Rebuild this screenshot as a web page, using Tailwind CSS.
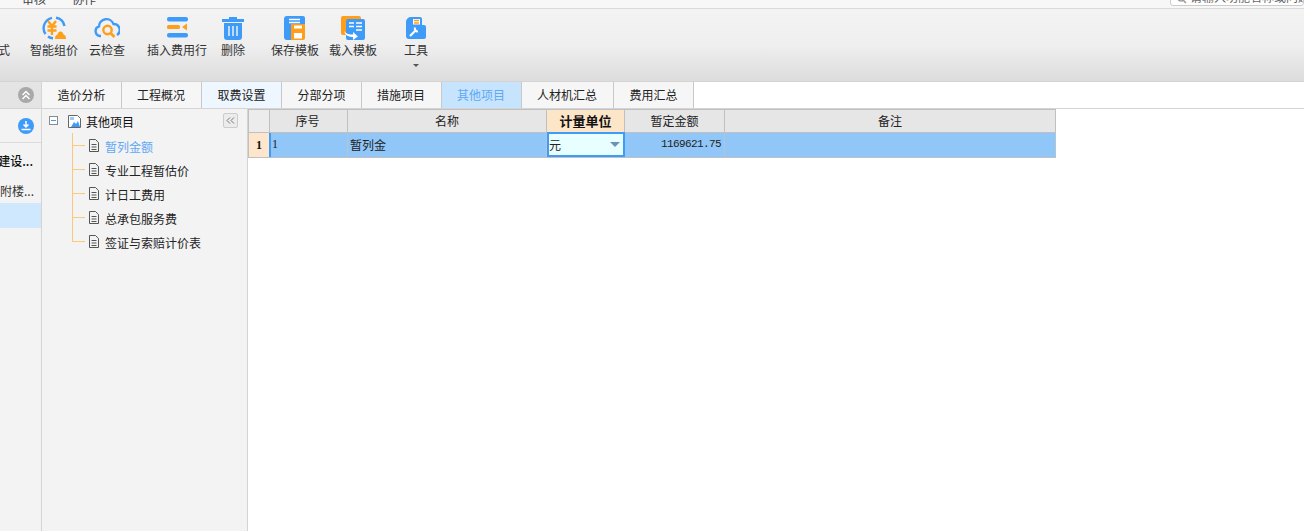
<!doctype html>
<html>
<head>
  <meta charset="UTF-8">
  <meta name="viewport" content="width=device-width, initial-scale=1.0">
  <script src="https://cdn.jsdelivr.net/npm/@tailwindcss/browser@4"></script>
</head>
<body class="bg-white h-screen overflow-hidden flex flex-col text-[12px] text-[#222] font-['Noto_Sans_CJK_SC','Liberation_Sans',sans-serif]">

<!-- top menu, cut off by the window -->
<div class="h-[9px] shrink-0 bg-[#f7f7f7] border-b border-[#d9d9d9] flex items-end overflow-hidden relative">
  <span class="ml-[22px] mb-[1px] text-[#444] leading-[16px]">审核</span>
  <span class="ml-[26px] mb-[1px] text-[#444] leading-[16px]">协作</span>
  <div class="ml-auto w-[134px] h-[16px] mb-[2px] self-end bg-white border border-[#ccc] rounded-[3px] flex items-end pl-[6px] text-[#666] leading-[16px] whitespace-nowrap overflow-hidden">
    <svg class="w-[10px] h-[10px] mr-[3px] mb-px shrink-0" viewBox="0 0 10 10" fill="none" stroke="#999" stroke-width="1.500"><circle cx="4" cy="4" r="3"/><path d="M6 6l3 3"/></svg>
    <span>请输入功能名称或问题</span>
  </div>
</div>

<!-- ribbon -->
<div class="h-[72px] shrink-0 bg-gradient-to-b from-[#f3f3f3] via-[#efefef] to-[#dcdcdc] flex leading-[16px] text-[#333]">
  <div class="w-[10px] flex justify-end pt-[33px]"><span class="whitespace-nowrap">式</span></div>

  <div class="w-[48px] ml-[20px] flex flex-col items-center">
    <svg class="mt-[7px] h-[24px] w-[26px]" viewBox="0 0 26 24" fill="none">
      <path d="M4.500 18A10.500 10.500 0 0 1 11 1.800" stroke="#3f9bf8" stroke-width="2.400"/>
      <path d="M15 1.800A10.500 10.500 0 0 1 23.500 10" stroke="#3f9bf8" stroke-width="2.400"/>
      <path d="M7 20.500a10 10 0 0 0 5 1.800" stroke="#3f9bf8" stroke-width="2.400"/>
      <path d="M7 5l4 5 4-5M6.500 10.500h9M6.500 14.500h9M11 10v9" stroke="#ff9e1b" stroke-width="2.400"/>
      <path d="M14 23c0-3 1-4 2.500-4.500 .5-2 1.500-3 3-3s2.500 1 3 3C24 19 25 20 25 23z" fill="#ff9e1b"/>
    </svg>
    <span class="mt-[2px] whitespace-nowrap">智能组价</span>
  </div>

  <div class="w-[36px] ml-[11px] flex flex-col items-center">
    <svg class="mt-[7px] h-[24px] w-[26px]" viewBox="0 0 26 24" fill="none">
      <path d="M7 20H6a5 5 0 0 1-1-9.700A7.500 7.500 0 0 1 19.500 8 6 6 0 0 1 23 19" stroke="#3f9bf8" stroke-width="2.400"/>
      <circle cx="13.500" cy="14" r="4.200" stroke="#ff9e1b" stroke-width="2.400"/>
      <path d="M17 17.500l3.500 3.500" stroke="#ff9e1b" stroke-width="2.600"/>
    </svg>
    <span class="mt-[2px] whitespace-nowrap">云检查</span>
  </div>

  <div class="w-[60px] ml-[22px] flex flex-col items-center">
    <svg class="mt-[7px] h-[24px] w-[24px]" viewBox="0 0 24 24">
      <rect x="2" y="1" width="21" height="4.500" rx="2" fill="#3f9bf8"/>
      <rect x="2" y="9" width="13" height="4" rx="1.500" fill="#ff9e1b"/>
      <path d="M22 7.500v7l-5-3.500z" fill="#ff9e1b"/>
      <rect x="2" y="17" width="21" height="4.500" rx="2" fill="#3f9bf8"/>
    </svg>
    <span class="mt-[2px] whitespace-nowrap">插入费用行</span>
  </div>

  <div class="w-[24px] ml-[14px] flex flex-col items-center">
    <svg class="mt-[7px] h-[24px] w-[24px]" viewBox="0 0 24 24">
      <path d="M8 1h8v2h7v3H1V3h7z" fill="#3f9bf8"/>
      <path d="M3 7h18v14a3 3 0 0 1-3 3H6a3 3 0 0 1-3-3z" fill="#3f9bf8"/>
      <path d="M8 10v10M12 10v10M16 10v10" stroke="#fff" stroke-width="1.300"/>
    </svg>
    <span class="mt-[2px] whitespace-nowrap">删除</span>
  </div>

  <div class="w-[48px] ml-[26px] flex flex-col items-center">
    <svg class="mt-[7px] h-[24px] w-[24px]" viewBox="0 0 24 24">
      <path d="M4 0h16a2 2 0 0 1 2 2v6H8v16H4a3 3 0 0 1-3-3V3a3 3 0 0 1 3-3z" fill="#3f9bf8"/>
      <path d="M6 3.500h11M6 6.500h11" stroke="#fff" stroke-width="1.500"/>
      <path d="M8 8h14v14a2 2 0 0 1-2 2H8z" fill="#ff9e1b"/>
      <rect x="11" y="9.500" width="8" height="3" fill="#fff"/>
      <rect x="11" y="17" width="8" height="5.500" fill="#fff"/>
    </svg>
    <span class="mt-[2px] whitespace-nowrap">保存模板</span>
  </div>

  <div class="w-[48px] ml-[10px] flex flex-col items-center">
    <svg class="mt-[7px] h-[24px] w-[24px]" viewBox="0 0 24 24">
      <rect x="0" y="0" width="20" height="19" rx="2" fill="#ff9e1b"/>
      <rect x="5" y="3" width="19" height="21" rx="2" fill="#3f9bf8"/>
      <path d="M8 7h5M15 7h6M8 10.500h5M15 10.500h6M15 14h6" stroke="#fff" stroke-width="1.500"/>
      <path d="M3 15c2 3 6 3.500 9 3.500V16l5 4.500-5 3.500v-3c-4 0-8-1.500-9-6z" fill="#fff"/>
    </svg>
    <span class="mt-[2px] whitespace-nowrap">载入模板</span>
  </div>

  <div class="w-[24px] ml-[27px] flex flex-col items-center">
    <svg class="mt-[7px] h-[24px] w-[20px]" viewBox="0 0 20 24">
      <path d="M5 1h9a2 2 0 0 1 2 2v6h2a2 2 0 0 1 2 2v10a2 2 0 0 1-2 2H3a3 3 0 0 1-3-3V6a5 5 0 0 1 5-5z" fill="#3f9bf8"/>
      <rect x="7" y="3" width="7" height="5.500" fill="#fff"/>
      <path d="M8 4.500h5M8 7h5" stroke="#ff9e1b" stroke-width="1.500"/>
      <path d="M4 20l6-6M9 11.500a3 3 0 0 0 3 4" stroke="#fff" stroke-width="2.200" fill="none"/>
    </svg>
    <span class="mt-[2px] whitespace-nowrap">工具</span>
    <span class="mt-[6px] w-0 h-0 border-x-[3px] border-x-transparent border-t-[3px] border-t-[#555]"></span>
  </div>
</div>

<!-- tabs -->
<div class="h-[28px] shrink-0 flex border-y border-[#d4d4d4] bg-white leading-[26px] text-center text-[#222]">
  <div class="w-[42px] bg-[#e4e4e4] border-r border-[#d4d4d4] flex items-center justify-end pr-[7px]">
    <span class="w-[16px] h-[16px] rounded-full bg-[#a9a9a9] flex items-center justify-center">
      <svg class="w-[10px] h-[10px]" viewBox="0 0 10 10" fill="none" stroke="#fff" stroke-width="1.500"><path d="M1.500 5L5 1.500 8.500 5M1.500 9L5 5.500 8.500 9"/></svg>
    </span>
  </div>
  <div class="w-[80px] bg-[#f6f6f6] border-r border-[#c8c8c8]">造价分析</div>
  <div class="w-[80px] bg-[#f6f6f6] border-r border-[#c8c8c8] pr-[1px]">工程概况</div>
  <div class="w-[80px] bg-[#eef6ff] border-r border-[#c8c8c8]">取费设置</div>
  <div class="w-[80px] bg-[#f6f6f6] border-r border-[#c8c8c8]">分部分项</div>
  <div class="w-[80px] bg-[#f6f6f6] border-r border-[#c8c8c8] pr-[1px]">措施项目</div>
  <div class="w-[80px] bg-[#c6e4fd] border-r border-[#c8c8c8] text-[#5fa8f5] pr-[1px]">其他项目</div>
  <div class="w-[92px] bg-[#f6f6f6] border-r border-[#c8c8c8] pr-[1px]">人材机汇总</div>
  <div class="w-[80px] bg-[#f6f6f6] border-r border-[#c8c8c8]">费用汇总</div>
</div>

<!-- main -->
<div class="flex-1 flex min-h-0">
  <!-- project tree, its left part is scrolled away -->
  <div class="w-[42px] shrink-0 bg-[#f3f3f3] border-r border-[#d4d4d4] overflow-hidden">
    <div class="h-[34px] border-b border-[#dcdcdc] flex items-center justify-end pr-[7px]">
      <span class="w-[16px] h-[16px] rounded-full bg-[#3f9bf8] flex items-center justify-center">
        <svg class="w-[10px] h-[10px]" viewBox="0 0 10 10" fill="none" stroke="#fff" stroke-width="1.500"><path d="M5 0v5.500M2.500 3.500L5 6l2.500-2.500M0.500 8.500h9"/></svg>
      </span>
    </div>
    <div class="h-[36px] flex items-center justify-end pr-[8px] whitespace-nowrap font-medium text-[#111]">建设...</div>
    <div class="h-[24px] flex items-center justify-end pr-[7px] whitespace-nowrap text-[#333]">附楼...</div>
    <div class="h-[25px] bg-[#cfe8fd]"></div>
  </div>

  <!-- other items tree -->
  <div class="w-[206px] shrink-0 bg-[#f3f3f3] border-r border-[#d4d4d4] leading-[24px] text-[#222]">
    <div class="h-[26px] flex items-center pl-[7px] pr-[9px]">
      <span class="w-[9px] h-[9px] border border-[#8a8a8a] flex items-center justify-center bg-white -mt-[3px]">
        <span class="w-[5px] h-px bg-[#3f9bf8]"></span>
      </span>
      <svg class="ml-[10px] w-[13px] h-[13px] -mt-[2px]" viewBox="0 0 13 13" fill="none">
        <path d="M.5.500h9l3 3v9H.5z" stroke="#666" fill="#fff"/>
        <rect x="2" y="2" width="4" height="3" fill="#9ccbf8"/>
        <path d="M3 12l3-5 2 2 2-3 2 6z" fill="#3f9bf8"/>
      </svg>
      <span class="ml-[5px] text-[#111]">其他项目</span>
      <span class="ml-auto w-[15px] h-[15px] border border-[#ccc] rounded-[2px] bg-[#ececec] flex items-center justify-center -mt-[3px]">
        <svg class="w-[9px] h-[7px]" viewBox="0 0 9 7" fill="none" stroke="#777"><path d="M4 .500L1 3.500l3 3M8 .500L5 3.500l3 3"/></svg>
      </span>
    </div>
    <ul class="relative">
      <li class="h-[24px] flex items-center pl-[30px]">
        <span class="w-[13px] h-px bg-[#fcc97a] -mt-[4px]"></span>
        <svg class="ml-[4px] w-[10px] h-[13px] -mt-[4px]" viewBox="0 0 10 13" fill="none" stroke="#555"><path d="M.5.500h6l3 3v9H.5zM2.500 5.500h5M2.500 8h5M2.500 10.500h5" /></svg>
        <span class="ml-[6px] text-[#5fa8f5]">暂列金额</span>
      </li>
      <li class="h-[24px] flex items-center pl-[30px]">
        <span class="w-[13px] h-px bg-[#fcc97a] -mt-[4px]"></span>
        <svg class="ml-[4px] w-[10px] h-[13px] -mt-[4px]" viewBox="0 0 10 13" fill="none" stroke="#555"><path d="M.5.500h6l3 3v9H.5zM2.500 5.500h5M2.500 8h5M2.500 10.500h5" /></svg>
        <span class="ml-[6px]">专业工程暂估价</span>
      </li>
      <li class="h-[24px] flex items-center pl-[30px]">
        <span class="w-[13px] h-px bg-[#fcc97a] -mt-[4px]"></span>
        <svg class="ml-[4px] w-[10px] h-[13px] -mt-[4px]" viewBox="0 0 10 13" fill="none" stroke="#555"><path d="M.5.500h6l3 3v9H.5zM2.500 5.500h5M2.500 8h5M2.500 10.500h5" /></svg>
        <span class="ml-[6px]">计日工费用</span>
      </li>
      <li class="h-[24px] flex items-center pl-[30px]">
        <span class="w-[13px] h-px bg-[#fcc97a] -mt-[4px]"></span>
        <svg class="ml-[4px] w-[10px] h-[13px] -mt-[4px]" viewBox="0 0 10 13" fill="none" stroke="#555"><path d="M.5.500h6l3 3v9H.5zM2.500 5.500h5M2.500 8h5M2.500 10.500h5" /></svg>
        <span class="ml-[6px]">总承包服务费</span>
      </li>
      <li class="h-[24px] flex items-center pl-[30px]">
        <span class="w-[13px] h-px bg-[#fcc97a] -mt-[4px]"></span>
        <svg class="ml-[4px] w-[10px] h-[13px] -mt-[4px]" viewBox="0 0 10 13" fill="none" stroke="#555"><path d="M.5.500h6l3 3v9H.5zM2.500 5.500h5M2.500 8h5M2.500 10.500h5" /></svg>
        <span class="ml-[6px]">签证与索赔计价表</span>
      </li>
      <span class="absolute left-[30px] -top-[2px] w-px h-[108px] bg-[#fcc97a]"></span>
    </ul>
  </div>

  <!-- grid -->
  <div class="flex-1 min-w-0">
    <div class="w-[808px] grid grid-cols-[21px_78px_199px_78px_100px_331px] grid-rows-[24px_24px] border-l border-b border-[#c0c0c0] text-[#222] leading-[22px]">
      <div class="bg-[#ececec] border-y border-r border-[#c0c0c0]"></div>
      <div class="bg-[#e6e6e6] border-y border-r border-[#c0c0c0] text-center pr-[2px]">序号</div>
      <div class="bg-[#e6e6e6] border-y border-r border-[#c0c0c0] text-center">名称</div>
      <div class="bg-[#fde6c8] border-y border-r border-[#c0c0c0] text-center font-bold text-[13px] text-[#111]">计量单位</div>
      <div class="bg-[#e6e6e6] border-y border-r border-[#c0c0c0] text-center">暂定金额</div>
      <div class="bg-[#e6e6e6] border-y border-r border-[#c0c0c0] text-center">备注</div>

      <div class="bg-[#fde6cb] border-r border-[#c0c0c0] text-center font-bold font-['Liberation_Serif',serif] text-[#111] leading-[24px]">1</div>
      <div class="bg-[#90c7f8] -ml-px border-l-2 border-l-[#3f9bf8] border-r border-r-[#b4c4d2] pl-px font-['Liberation_Serif',serif] leading-[23px]">1</div>
      <div class="bg-[#90c7f8] border-r border-[#b4c4d2] pl-[2px] leading-[23px]">暂列金</div>
      <div class="bg-[#e8ffff] border-2 border-[#3f9bf8] flex items-center pr-[3px] -mt-px">
        <span>元</span>
        <span class="ml-auto w-0 h-0 border-x-[5px] border-x-transparent border-t-[5px] border-t-[#6b93b8]"></span>
      </div>
      <div class="bg-[#90c7f8] border-r border-[#b4c4d2] text-right pr-[3px] font-['Liberation_Mono',monospace] text-[11px] tracking-[-0.6px] leading-[23px]">1169621.75</div>
      <div class="bg-[#90c7f8] border-r border-[#b4c4d2]"></div>
    </div>
  </div>
</div>

</body>
</html>
